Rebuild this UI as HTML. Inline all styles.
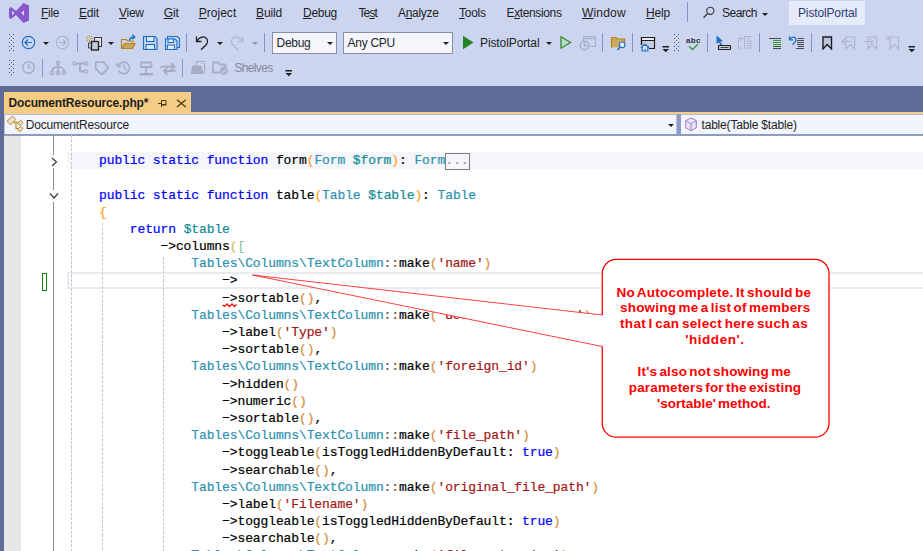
<!DOCTYPE html>
<html><head><meta charset='utf-8'><title>PistolPortal</title><style>
html,body{margin:0;padding:0}
body{width:923px;height:551px;overflow:hidden;position:relative;background:#ccd5f0;font-family:"Liberation Sans", sans-serif;}
.t{position:absolute;white-space:pre;line-height:16px;font-size:12px;font-family:"Liberation Sans", sans-serif;}
.a{position:absolute}
u{text-decoration:underline;text-decoration-thickness:1px;text-underline-offset:1px}
.ln{position:absolute;left:99px;white-space:pre;font-family:"Liberation Mono", monospace;font-size:13px;letter-spacing:-0.11px;line-height:17px;height:17px;color:#000;-webkit-text-stroke:0.2px currentColor}
.k{color:#0000ff}.ty{color:#2b91af}.v{color:#0f8a96}.s{color:#a31515}
.p1{color:#ffa31a}.p2{color:#d4bc6a}.p3{color:#8cc896}.p4{color:#d4903c}.g{color:#5a5a5a}
.cal{position:absolute;white-space:pre;font-family:"Liberation Sans", sans-serif;font-weight:bold;font-size:13.5px;color:#ff0000;line-height:16px}
</style></head>
<body>
<div class='t' style='left:41px;top:5px;letter-spacing:-0.286px;color:#1e1e1e'><u>F</u>ile</div>
<div class='t' style='left:79px;top:5px;letter-spacing:-0.172px;color:#1e1e1e'><u>E</u>dit</div>
<div class='t' style='left:119px;top:5px;letter-spacing:-0.262px;color:#1e1e1e'><u>V</u>iew</div>
<div class='t' style='left:163.75px;top:5px;letter-spacing:-0.115px;color:#1e1e1e'><u>G</u>it</div>
<div class='t' style='left:198.75px;top:5px;letter-spacing:0.020px;color:#1e1e1e'><u>P</u>roject</div>
<div class='t' style='left:256px;top:5px;letter-spacing:-0.138px;color:#1e1e1e'><u>B</u>uild</div>
<div class='t' style='left:303px;top:5px;letter-spacing:-0.275px;color:#1e1e1e'><u>D</u>ebug</div>
<div class='t' style='left:358.5px;top:5px;letter-spacing:-0.879px;color:#1e1e1e'>Te<u>s</u>t</div>
<div class='t' style='left:398px;top:5px;letter-spacing:-0.315px;color:#1e1e1e'>A<u>n</u>alyze</div>
<div class='t' style='left:459px;top:5px;letter-spacing:-0.253px;color:#1e1e1e'><u>T</u>ools</div>
<div class='t' style='left:506.5px;top:5px;letter-spacing:-0.370px;color:#1e1e1e'>E<u>x</u>tensions</div>
<div class='t' style='left:582px;top:5px;letter-spacing:0.177px;color:#1e1e1e'><u>W</u>indow</div>
<div class='t' style='left:646px;top:5px;letter-spacing:-0.172px;color:#1e1e1e'><u>H</u>elp</div>
<svg class='a' style='left:8px;top:2px' width='22' height='22' viewBox='0 0 22 22'>
<path d='M1 6.500 L3 5 L8 9 L15.500 1 L21 3.500 L21 18.500 L15.500 21 L8 13 L3 17 L1 15.500 Z M4 8.500 L6.500 11 L4 13.500 Z M16 8.200 L13.200 11 L16 13.800 Z' fill='#8a56cc' fill-rule='evenodd'/></svg>
<div class='a' style='left:687px;top:2px;width:1px;height:20px;background:#8093c6'></div>
<svg class='a' style='left:702px;top:6px' width='14' height='14' viewBox='0 0 14 14'><circle cx='8.300' cy='4.800' r='3.600' fill='none' stroke='#3a3a3a' stroke-width='1.100'/><path d='M5.700 7.500 L1.500 11.800' stroke='#3a3a3a' stroke-width='1.300' fill='none'/></svg>
<div class='t ' style='left:722px;top:5px;font-size:12px;font-weight:normal;color:#1e1e1e;letter-spacing:-0.505px;'>Search</div>
<div class='a' style='left:762px;top:13px;width:0;height:0;border-left:3px solid transparent;border-right:3px solid transparent;border-top:3px solid #1e1e1e'></div>
<div class='a' style='left:789px;top:1px;width:76px;height:23.500px;background:#e6ebfa'></div>
<div class='t ' style='left:798px;top:5px;font-size:12px;font-weight:normal;color:#2b3a75;letter-spacing:-0.142px;'>PistolPortal</div>
<svg class='a' style='left:9px;top:34px' width='5' height='21' fill='#4a5680' shape-rendering='crispEdges'><rect x='0' y='0' width='1' height='1'/><rect x='4' y='0' width='1' height='1'/><rect x='2' y='2' width='1' height='1'/><rect x='0' y='4' width='1' height='1'/><rect x='4' y='4' width='1' height='1'/><rect x='2' y='6' width='1' height='1'/><rect x='0' y='8' width='1' height='1'/><rect x='4' y='8' width='1' height='1'/><rect x='2' y='10' width='1' height='1'/><rect x='0' y='12' width='1' height='1'/><rect x='4' y='12' width='1' height='1'/><rect x='2' y='14' width='1' height='1'/><rect x='0' y='16' width='1' height='1'/><rect x='4' y='16' width='1' height='1'/></svg>
<svg class='a' style='left:21px;top:35px' width='15' height='15' viewBox='0 0 15 15'><circle cx='7.5' cy='7.5' r='6.2' fill='none' stroke='#1b6fc2' stroke-width='1.2'/><path d='M11 7.5 H4.2 M7 4.5 L4 7.5 L7 10.5' fill='none' stroke='#1b6fc2' stroke-width='1.2'/></svg>
<div class='a' style='left:43px;top:42px;width:0;height:0;border-left:3px solid transparent;border-right:3px solid transparent;border-top:3px solid #1e1e1e'></div>
<svg class='a' style='left:55px;top:35px' width='15' height='15' viewBox='0 0 15 15'><circle cx='7.5' cy='7.5' r='6.2' fill='none' stroke='#a9b0c8' stroke-width='1.1'/><path d='M4 7.5 H10.8 M8 4.5 L11 7.5 L8 10.5' fill='none' stroke='#a9b0c8' stroke-width='1.1'/></svg>
<div class='a' style='left:77px;top:33px;width:1px;height:19px;background:#8093c6'></div>
<svg class='a' style='left:85px;top:34px' width='18' height='17' viewBox='0 0 18 17'>
<g stroke='#c8922a' stroke-width='0.900' fill='none'><path d='M4.500 1 V3.200 M4.500 5.800 V8 M1 4.500 H3.200 M5.800 4.500 H8 M2 2 L3.600 3.600 M5.400 5.400 L7 7 M7 2 L5.400 3.600 M3.600 5.400 L2 7'/></g>
<rect x='9.500' y='3.500' width='7' height='9' fill='#dfe3f0' stroke='#3a3a3a' stroke-width='1'/>
<path d='M6.500 9 H3.500 V14 H6.500' fill='none' stroke='#3a3a3a' stroke-width='1'/>
<rect x='6.500' y='7.500' width='7' height='8.500' fill='#c4c9dc' stroke='#1e1e1e' stroke-width='1.300'/></svg>
<div class='a' style='left:108px;top:42px;width:0;height:0;border-left:3px solid transparent;border-right:3px solid transparent;border-top:3px solid #1e1e1e'></div>
<svg class='a' style='left:120px;top:34px' width='17' height='16' viewBox='0 0 17 16'>
<path d='M1.500 14.500 V5.500 H6 L7.500 7 H13 V9' fill='none' stroke='#b58516' stroke-width='1.200'/><path d='M1.500 14.500 L4.500 9.500 H15 L12.500 14.500 Z' fill='#c9a55a' stroke='#b58516' stroke-width='1.200' stroke-linejoin='round'/>
<path d='M9.500 7 C9.500 4 11.500 3 14.200 3 M12.300 0.800 L14.800 3 L12.300 5.200' fill='none' stroke='#1b6fc2' stroke-width='1.300'/></svg>
<svg class='a' style='left:142px;top:35px' width='16' height='15' viewBox='0 0 16 15'><path d='M1.500 1.500 H13 L15 3.500 V14.500 H1.500 Z' fill='#c5d5ee' stroke='#1b6fc2' stroke-width='1.100'/><rect x='4.500' y='1.500' width='7.500' height='5' fill='#dfe9f8' stroke='#1b6fc2' stroke-width='1.100'/><rect x='4' y='9.500' width='8.500' height='5' fill='#dfe9f8' stroke='#1b6fc2' stroke-width='1.100'/></svg>
<svg class='a' style='left:164px;top:35px' width='17' height='15' viewBox='0 0 17 15'><path d='M3.500 3.500 V1.500 H13.500 L15.500 3.500 V12.500 H13' fill='#c5d5ee' stroke='#1b6fc2' stroke-width='1.100'/><path d='M1.500 4 H11 L13 6 V14.500 H1.500 Z' fill='#c5d5ee' stroke='#1b6fc2' stroke-width='1.100'/><rect x='4' y='4' width='5.500' height='3.500' fill='#dfe9f8' stroke='#1b6fc2' stroke-width='1'/><rect x='3.500' y='10' width='7' height='4.500' fill='#dfe9f8' stroke='#1b6fc2' stroke-width='1'/></svg>
<div class='a' style='left:186px;top:33px;width:1px;height:19px;background:#8093c6'></div>
<svg class='a' style='left:194px;top:35px' width='16' height='16' viewBox='0 0 16 16'><path d='M2.500 1.500 V6.500 H7.500 M3 6 C5 2.500 9 1 11.500 2.500 C14.500 4.500 14 8 11.500 10.500 L7 14.800' fill='none' stroke='#1e1e1e' stroke-width='1.300'/></svg>
<div class='a' style='left:217px;top:42px;width:0;height:0;border-left:3px solid transparent;border-right:3px solid transparent;border-top:3px solid #1e1e1e'></div>
<svg class='a' style='left:230px;top:35px' width='16' height='16' viewBox='0 0 16 16'><path d='M12.500 1.500 V6.500 H7.500 M12 6 C10 2.500 6 1 3.500 2.500 C0.500 4.500 1 8 3.500 10.500 L8 14.800' fill='none' stroke='#aeb4ca' stroke-width='1.200'/></svg>
<div class='a' style='left:252px;top:42px;width:0;height:0;border-left:3px solid transparent;border-right:3px solid transparent;border-top:3px solid #8e96b4'></div>
<div class='a' style='left:264px;top:33px;width:1px;height:19px;background:#8093c6'></div>
<div class='a' style='left:272px;top:32px;width:63px;height:20px;background:#f4f6fc;border:1px solid #8790a8'></div><div class='t ' style='left:276.5px;top:35px;font-size:12px;font-weight:normal;color:#1e1e1e;letter-spacing:-0.275px;'>Debug</div><div class='a' style='left:327px;top:42px;width:0;height:0;border-left:3px solid transparent;border-right:3px solid transparent;border-top:3px solid #1e1e1e'></div>
<div class='a' style='left:343px;top:32px;width:108px;height:20px;background:#f4f6fc;border:1px solid #8790a8'></div><div class='t ' style='left:347.5px;top:35px;font-size:12px;font-weight:normal;color:#1e1e1e;letter-spacing:-0.266px;'>Any CPU</div><div class='a' style='left:443px;top:42px;width:0;height:0;border-left:3px solid transparent;border-right:3px solid transparent;border-top:3px solid #1e1e1e'></div>
<svg class='a' style='left:462px;top:35px' width='13' height='15' viewBox='0 0 13 15'><path d='M1 0.800 L11.500 7.500 L1 14.200 Z' fill='#238423'/></svg>
<div class='t ' style='left:480px;top:35px;font-size:12px;font-weight:normal;color:#1e1e1e;letter-spacing:-0.100px;'>PistolPortal</div>
<div class='a' style='left:546px;top:42px;width:0;height:0;border-left:3px solid transparent;border-right:3px solid transparent;border-top:3px solid #1e1e1e'></div>
<svg class='a' style='left:559px;top:35px' width='13' height='15' viewBox='0 0 13 15'><path d='M2 1.800 L11.500 7.500 L2 13.200 Z' fill='#c2d6d4' stroke='#2e8b2e' stroke-width='1.3'/></svg>
<svg class='a' style='left:579px;top:35px' width='18' height='16' viewBox='0 0 18 16'><path d='M4.500 6 V1.500 H16.500 V11.500 H11' fill='none' stroke='#a9b0c8' stroke-width='1.2'/><path d='M4.500 3.500 H16.500' stroke='#a9b0c8' stroke-width='1.5'/><circle cx='5.500' cy='10.500' r='4.300' fill='none' stroke='#a9b0c8' stroke-width='1.5'/><path d='M5.500 7.500 V10.800 H8.500' fill='none' stroke='#a9b0c8' stroke-width='1.5'/></svg>
<div class='a' style='left:602px;top:33px;width:1px;height:19px;background:#8093c6'></div>
<svg class='a' style='left:610px;top:35px' width='17' height='16' viewBox='0 0 17 16'><path d='M1.500 12.500 V2.500 H6 L7.500 4 H14.500 V8' fill='#c9a961' stroke='#b58516' stroke-width='1.200'/><path d='M1.500 12.500 H9 V5.500 H14.500' fill='#c9a961' stroke='none'/><circle cx='12.200' cy='9.800' r='2.800' fill='#f2f6fd' stroke='#1b6fc2' stroke-width='1.2'/><path d='M10.200 12 L7.500 15' stroke='#1b6fc2' stroke-width='1.5'/></svg>
<div class='a' style='left:632px;top:33px;width:1px;height:19px;background:#8093c6'></div>
<svg class='a' style='left:640px;top:36px' width='17' height='16' viewBox='0 0 17 16'><rect x='1.500' y='1.500' width='13' height='11' fill='#c8cde0' stroke='none'/><path d='M1.500 9 V1.500 H14.500 V12.500 H9' fill='none' stroke='#1e1e1e' stroke-width='1.200'/><path d='M1.500 4.500 H14.500' stroke='#1e1e1e' stroke-width='1'/><path d='M1.500 1.500 H14.500 V4.500 H1.500 Z' fill='#e8ebf6'/><path d='M1.500 9 V1.500 H14.500 V5' fill='none' stroke='#1e1e1e' stroke-width='1.200'/><path d='M1.500 4.500 H14.500' stroke='#1e1e1e' stroke-width='1'/><path d='M0.800 11.800 L5 8.300 L9.200 11.800 M2.200 11 V15 H7.800 V11' fill='#eef2fb' stroke='#1b6fc2' stroke-width='1.200'/><path d='M5 15 V12.800' stroke='#1b6fc2' stroke-width='1.200'/></svg>
<svg class='a' style='left:662px;top:45.5px' width='8' height='7' viewBox='0 0 8 7'><path d='M0.500 0 H7 V1.500 H0.500 Z M0.500 3 H7 L3.750 6.300 Z' fill='#1e1e1e'/></svg>
<svg class='a' style='left:674px;top:34px' width='5' height='21' fill='#4a5680' shape-rendering='crispEdges'><rect x='0' y='0' width='1' height='1'/><rect x='4' y='0' width='1' height='1'/><rect x='2' y='2' width='1' height='1'/><rect x='0' y='4' width='1' height='1'/><rect x='4' y='4' width='1' height='1'/><rect x='2' y='6' width='1' height='1'/><rect x='0' y='8' width='1' height='1'/><rect x='4' y='8' width='1' height='1'/><rect x='2' y='10' width='1' height='1'/><rect x='0' y='12' width='1' height='1'/><rect x='4' y='12' width='1' height='1'/><rect x='2' y='14' width='1' height='1'/><rect x='0' y='16' width='1' height='1'/><rect x='4' y='16' width='1' height='1'/></svg>
<div class='t' style='left:686px;top:35.100px;font-size:8px;font-weight:bold;letter-spacing:0.300px;color:#2c2c2c;line-height:11px'>abc</div>
<svg class='a' style='left:688px;top:43px' width='12' height='8' viewBox='0 0 12 8'><path d='M1 3.300 L4.500 6.500 L10 1' fill='none' stroke='#2e9b2e' stroke-width='1.300'/></svg>
<div class='a' style='left:707px;top:33px;width:1px;height:19px;background:#8093c6'></div>
<svg class='a' style='left:714px;top:34px' width='18' height='17' viewBox='0 0 18 17'><path d='M2.500 1.500 L2.500 10 L4.800 8.300 L6.800 11.500 L8.200 10.700 L6.300 7.500 L9 7.200 Z' fill='#1b6fc2'/><rect x='4.500' y='11.500' width='12' height='4' rx='0.800' fill='#c8cde0' stroke='#1e1e1e' stroke-width='1.200'/><path d='M6.500 13.500 H14.500' stroke='#1e1e1e' stroke-width='0.800'/></svg>
<svg class='a' style='left:737px;top:35px' width='16' height='15' viewBox='0 0 16 15'><g fill='none' stroke='#aeb4ca'><path d='M5 13 H1.500 V3.500 H5 M3.300 1.500 L5.300 3.500 L3.300 5.500' stroke-width='1'/><path d='M7.500 14.500 V1.500 H15' stroke-width='1.100'/><path d='M9.500 3.800 H13 M9.500 6.100 H15 M9.500 8.400 H15 M9.500 10.700 H15 M9.500 13 H15' stroke-width='1'/></g></svg>
<div class='a' style='left:759px;top:33px;width:1px;height:19px;background:#8093c6'></div>
<svg class='a' style='left:768px;top:36px' width='14' height='14' viewBox='0 0 14 14'><g shape-rendering='crispEdges'><path d='M1 2.500 H13 M5 10.500 H13 M5 12.500 H13' stroke='#484848' stroke-width='1'/><path d='M5 4.500 H13 M5 6.500 H13 M5 8.500 H13' stroke='#2e9b2e' stroke-width='1'/></g></svg>
<svg class='a' style='left:788px;top:35px' width='18' height='15' viewBox='0 0 18 15'><path d='M1.500 1.200 V4.800 H5.200 M2 4.500 C3.500 1.200 8 1.500 8 4.800 C8 7 6 7.500 4.500 9.800' fill='none' stroke='#1b6fc2' stroke-width='1.300'/><path shape-rendering='crispEdges' d='M10 3.500 H16 M9 5.500 H16 M9 7.500 H16 M9 9.500 H16 M10 11.500 H16 M8 13.500 H16' stroke='#484848' stroke-width='1'/></svg>
<div class='a' style='left:811px;top:33px;width:1px;height:19px;background:#8093c6'></div>
<svg class='a' style='left:817px;top:35px' width='18' height='15' viewBox='0 0 18 15'><path d='M6 2 H14.5 V14 L10.25 9.500 L6 14 Z' fill='#bcc4e0' stroke='#1e1e1e' stroke-width='1.4'/></svg>
<svg class='a' style='left:840px;top:35px' width='18' height='15' viewBox='0 0 18 15'><path d='M6 2 H14.5 V14 L10.25 9.500 L6 14 Z' fill='none' stroke='#b0b6cc' stroke-width='1.2'/><path d='M2 6.500 H11 M4.800 4 L2 6.500 L4.800 9' fill='none' stroke='#b0b6cc' stroke-width='1.100'/></svg>
<svg class='a' style='left:862px;top:35px' width='18' height='15' viewBox='0 0 18 15'><path d='M6 2 H14.5 V14 L10.25 9.500 L6 14 Z' fill='none' stroke='#b0b6cc' stroke-width='1.2'/><path d='M1 6.500 H11 M8.300 4 L11 6.500 L8.300 9' fill='none' stroke='#b0b6cc' stroke-width='1.100'/></svg>
<svg class='a' style='left:884px;top:35px' width='18' height='15' viewBox='0 0 18 15'><path d='M6 2 H14.5 V14 L10.25 9.500 L6 14 Z' fill='none' stroke='#b0b6cc' stroke-width='1.2'/><path d='M1.500 0.500 L6.500 5.500 M6.500 0.500 L1.500 5.500' fill='none' stroke='#b0b6cc' stroke-width='1'/></svg>
<svg class='a' style='left:908px;top:46px' width='8' height='7' viewBox='0 0 8 7'><path d='M0.500 0 H7 V1.500 H0.500 Z M0.500 3 H7 L3.750 6.300 Z' fill='#1e1e1e'/></svg>
<svg class='a' style='left:9px;top:60px' width='5' height='18' fill='#4a5680' shape-rendering='crispEdges'><rect x='0' y='0' width='1' height='1'/><rect x='4' y='0' width='1' height='1'/><rect x='2' y='2' width='1' height='1'/><rect x='0' y='4' width='1' height='1'/><rect x='4' y='4' width='1' height='1'/><rect x='2' y='6' width='1' height='1'/><rect x='0' y='8' width='1' height='1'/><rect x='4' y='8' width='1' height='1'/><rect x='2' y='10' width='1' height='1'/><rect x='0' y='12' width='1' height='1'/><rect x='4' y='12' width='1' height='1'/><rect x='2' y='14' width='1' height='1'/></svg>
<svg class='a' style='left:21px;top:60px' width='15' height='15' viewBox='0 0 15 15'><circle cx='7.500' cy='7.500' r='5.800' fill='none' stroke='#a7adc3' stroke-width='1.500'/><path d='M7.500 3.800 V7.800 H10.500' fill='none' stroke='#a7adc3' stroke-width='1.300'/></svg>
<div class='a' style='left:42px;top:59px;width:1px;height:18px;background:#8797c8'></div>
<svg class='a' style='left:49px;top:60px' width='18' height='16' viewBox='0 0 18 16'><g fill='none' stroke='#a7adc3' stroke-width='1.500'><circle cx='9' cy='2.800' r='1.600'/><circle cx='3' cy='13' r='1.600'/><circle cx='9' cy='13' r='1.600'/><circle cx='15' cy='13' r='1.600'/><path d='M9 4.500 V11.300 M3 11.300 C3 5.500 15 5.500 15 11.300' stroke-width='1.800'/></g></svg>
<svg class='a' style='left:72px;top:60px' width='17' height='15' viewBox='0 0 17 15'><g fill='none' stroke='#a7adc3'><path d='M4.500 3.500 H12 M8 3.500 V10 Q8 11.500 9.500 11.500 H12' stroke-width='2.200'/><circle cx='2.700' cy='3.500' r='1.700' stroke-width='1.300'/><circle cx='14' cy='3.500' r='1.700' stroke-width='1.300'/><circle cx='14' cy='11.500' r='1.700' stroke-width='1.300'/></g></svg>
<svg class='a' style='left:94px;top:60px' width='16' height='16' viewBox='0 0 16 16'><path d='M1.800 2.200 H9.800 L14.300 8 L8 14.500 L1.800 9 Z' fill='none' stroke='#a7adc3' stroke-width='1.800' stroke-linejoin='round'/></svg>
<svg class='a' style='left:115px;top:60px' width='16' height='16' viewBox='0 0 16 16'><path d='M3.200 6 A5.800 5.800 0 1 1 3.500 10.500' fill='none' stroke='#a7adc3' stroke-width='1.700'/><path d='M1 3.500 L3 6.800 L6.300 5.500' fill='none' stroke='#a7adc3' stroke-width='1.500'/><path d='M9 4.500 V8 L11.300 10.500' fill='none' stroke='#a7adc3' stroke-width='1.400'/></svg>
<svg class='a' style='left:138px;top:60px' width='16' height='16' viewBox='0 0 16 16'><g fill='none' stroke='#a7adc3'><rect x='3' y='2.500' width='10.500' height='4.500' stroke-width='1.800' rx='0.500'/><path d='M8.200 7 V13' stroke-width='1.800'/><path d='M1.500 14.200 H15' stroke-width='2.400'/></g></svg>
<svg class='a' style='left:159px;top:60px' width='18' height='16' viewBox='0 0 18 16'><g fill='none' stroke='#a7adc3' stroke-width='1.800'><path d='M2 8 Q2 6.500 4 6.500 H15 M12 3 L15.500 6.500 L12 10'/><path d='M16.500 9.500 Q16.500 11 14.500 11 H5.500 M8.500 7.500 L5 11 L8.500 14.500' /></g></svg>
<div class='a' style='left:182px;top:59px;width:1px;height:18px;background:#8797c8'></div>
<svg class='a' style='left:190px;top:60px' width='16' height='15' viewBox='0 0 16 15'><path d='M6.500 5 V1.500 H14.500 V13' fill='#d5dbee' stroke='#a7adc3' stroke-width='1.200'/><path d='M1.500 13.500 L2.500 6 H11 L13.500 13.500 Z' fill='#a7adc3' stroke='#a7adc3' stroke-width='1'/><path d='M10.500 3.500 H12.500' stroke='#a7adc3'/></svg>
<svg class='a' style='left:211px;top:60px' width='18' height='16' viewBox='0 0 18 16'><path d='M9 12.500 H2 V2.500 H7 L9 4.500 H14.500 V7' fill='none' stroke='#a7adc3' stroke-width='1.800' stroke-linejoin='round'/><circle cx='13' cy='10.700' r='4' fill='#a7adc3'/><path d='M11 10.700 L12.600 12.300 L15.200 9.300' fill='none' stroke='#ccd5f0' stroke-width='1.200'/></svg>
<div class='t ' style='left:234.5px;top:60px;font-size:12px;font-weight:normal;color:#85889a;letter-spacing:-0.672px;'>Shelves</div>
<svg class='a' style='left:285px;top:69.5px' width='8' height='7' viewBox='0 0 8 7'><path d='M0.500 0 H7 V1.500 H0.500 Z M0.500 3 H7 L3.750 6.300 Z' fill='#1e1e1e'/></svg>
<div class='a' style='left:0;top:86px;width:923px;height:465px;background:#5d6b99'></div>
<div class='a' style='left:4px;top:112px;width:919px;height:2px;background:#f5cc84'></div>
<div class='a' style='left:4px;top:92px;width:187px;height:22px;background:#f5cc84'></div>
<div class='t ' style='left:8.5px;top:95px;font-size:12px;font-weight:bold;color:#1e1e1e;letter-spacing:-0.174px;'>DocumentResource.php*</div>
<svg class='a' style='left:157px;top:98px' width='11' height='11' viewBox='0 0 11 11'><path d='M1 5.500 H4.500 M4.500 2 V9 M4.500 2.500 H9 V7 H4.500 M9 6.500 H5' fill='none' stroke='#4f3a10' stroke-width='1'/></svg>
<svg class='a' style='left:176px;top:99px' width='11' height='9' viewBox='0 0 11 9'><path d='M1 0.800 L9.800 8 M9.800 0.800 L1 8' stroke='#4f3a10' stroke-width='1.300'/></svg>
<div class='a' style='left:4px;top:114px;width:919px;height:21px;background:#b4bedb'></div>
<div class='a' style='left:5px;top:115px;width:671px;height:19px;background:#f2f5fd'></div>
<div class='a' style='left:677px;top:114px;width:3.500px;height:21px;background:#8c9bc8'></div>
<div class='a' style='left:681px;top:115px;width:242px;height:19px;background:#f2f5fd'></div>
<div class='a' style='left:4px;top:134px;width:919px;height:1.500px;background:#8e9bbc'></div>
<svg class='a' style='left:6px;top:115px' width='18' height='18' viewBox='0 0 18 18'><g fill='#e9e5da' stroke='#b8860b' stroke-width='1' stroke-linejoin='miter'><path d='M1 6.250 L6.500 1.250 L9.750 4.500 L4.500 9.750 Z'/><path d='M11.750 8.500 L14.750 5.250 L17 7.500 L13.750 10.500 Z'/><path d='M11.500 14.250 L14.750 11.500 L17 13.250 L13.750 16.750 Z'/></g><path d='M7 6.500 L8 7.250 H12.500 M10 7.250 V13.500 H12.500' fill='none' stroke='#b8860b' stroke-width='1.100'/></svg>
<div class='t ' style='left:25.7px;top:117px;font-size:12px;font-weight:normal;color:#1e1e1e;letter-spacing:-0.173px;'>DocumentResource</div>
<div class='a' style='left:668px;top:124px;width:0;height:0;border-left:3px solid transparent;border-right:3px solid transparent;border-top:3px solid #1e1e1e'></div>
<svg class='a' style='left:685px;top:117px' width='13' height='15' viewBox='0 0 13 15'><path d='M6 1 L11.300 3.600 V10.800 L6 13.800 L0.700 10.800 V3.600 Z M0.700 3.600 L6 6.500 L11.300 3.600 M6 6.500 V13.800' fill='#e9e2f6' stroke='#9c82c9' stroke-width='1' stroke-linejoin='round'/></svg>
<div class='t ' style='left:701.5px;top:117px;font-size:12px;font-weight:normal;color:#1e1e1e;letter-spacing:-0.186px;'>table(Table $table)</div>
<div class='a' style='left:4px;top:135.500px;width:919px;height:416px;background:#ffffff'></div>
<div class='a' style='left:4px;top:135.500px;width:17px;height:416px;background:#e6e7e8'></div>
<div class='a' style='left:53px;top:135px;width:1px;height:416px;background:#8c8c8c'></div>
<div class='a' style='left:67px;top:152px;width:856px;height:17.400px;background:#f5f6fa'></div>
<div class='a' style='left:67px;top:272px;width:860px;height:13px;border:2px solid #eaeaf2;background:#fff'></div>
<div class='a' style='left:71px;top:135px;width:1px;height:416px;background:repeating-linear-gradient(to bottom,#c8c8c8 0,#c8c8c8 3px,transparent 3px,transparent 4.5px)'></div>
<div class='a' style='left:102px;top:223px;width:1px;height:328px;background:repeating-linear-gradient(to bottom,#c8c8c8 0,#c8c8c8 3px,transparent 3px,transparent 4.5px)'></div>
<div class='a' style='left:163px;top:257px;width:1px;height:294px;background:repeating-linear-gradient(to bottom,#c8c8c8 0,#c8c8c8 3px,transparent 3px,transparent 4.5px)'></div>
<div class='a' style='left:48px;top:155px;width:11px;height:13px;background:#fff'></div>
<svg class='a' style='left:50px;top:156px' width='8' height='12' viewBox='0 0 8 12'><path d='M2 2 L6.500 6 L2 10' fill='none' stroke='#3c3c3c' stroke-width='1.200'/></svg>
<div class='a' style='left:48px;top:190px;width:11px;height:12px;background:#fff'></div>
<svg class='a' style='left:48px;top:191px' width='12' height='9' viewBox='0 0 12 9'><path d='M2 2.500 L6 7 L10 2.500' fill='none' stroke='#3c3c3c' stroke-width='1.200'/></svg>
<div class='a' style='left:42px;top:273px;width:3px;height:16px;border:1px solid #118011'></div>
<div class='ln' style='top:152px'><span class='k'>public static function</span> form<span class='p1'>(</span><span class='ty'>Form</span> <span class='v'>$form</span><span class='p1'>)</span>: <span class='ty'>Form</span></div>
<div class='ln' style='top:169px'></div>
<div class='ln' style='top:187px'><span class='k'>public static function</span> table<span class='p1'>(</span><span class='ty'>Table</span> <span class='v'>$table</span><span class='p1'>)</span>: <span class='ty'>Table</span></div>
<div class='ln' style='top:204px'><span class='p1'>{</span></div>
<div class='ln' style='top:221px'>    <span class='k'>return</span> <span class='v'>$table</span></div>
<div class='ln' style='top:238px'>        −>columns<span class='p2'>(</span><span class='p3'>[</span></div>
<div class='ln' style='top:255px'>            <span class='ty'>Tables\Columns\TextColumn</span><span class='g'>::</span>make<span class='p4'>(</span><span class='s'>&#x27;name&#x27;</span><span class='p4'>)</span></div>
<div class='ln' style='top:272px'>                −></div>
<div class='ln' style='top:290px'>                −>sortable<span class='p4'>(</span><span class='p4'>)</span>,</div>
<div class='ln' style='top:307px'>            <span class='ty'>Tables\Columns\TextColumn</span><span class='g'>::</span>make<span class='p4'>(</span><span class='s'>&#x27;documentable_type&#x27;</span><span class='p4'>)</span></div>
<div class='ln' style='top:324px'>                −>label<span class='p4'>(</span><span class='s'>&#x27;Type&#x27;</span><span class='p4'>)</span></div>
<div class='ln' style='top:341px'>                −>sortable<span class='p4'>(</span><span class='p4'>)</span>,</div>
<div class='ln' style='top:358px'>            <span class='ty'>Tables\Columns\TextColumn</span><span class='g'>::</span>make<span class='p4'>(</span><span class='s'>&#x27;foreign_id&#x27;</span><span class='p4'>)</span></div>
<div class='ln' style='top:376px'>                −>hidden<span class='p4'>(</span><span class='p4'>)</span></div>
<div class='ln' style='top:393px'>                −>numeric<span class='p4'>(</span><span class='p4'>)</span></div>
<div class='ln' style='top:410px'>                −>sortable<span class='p4'>(</span><span class='p4'>)</span>,</div>
<div class='ln' style='top:427px'>            <span class='ty'>Tables\Columns\TextColumn</span><span class='g'>::</span>make<span class='p4'>(</span><span class='s'>&#x27;file_path&#x27;</span><span class='p4'>)</span></div>
<div class='ln' style='top:444px'>                −>toggleable<span class='p4'>(</span>isToggledHiddenByDefault: <span class='k'>true</span><span class='p4'>)</span></div>
<div class='ln' style='top:462px'>                −>searchable<span class='p4'>(</span><span class='p4'>)</span>,</div>
<div class='ln' style='top:479px'>            <span class='ty'>Tables\Columns\TextColumn</span><span class='g'>::</span>make<span class='p4'>(</span><span class='s'>&#x27;original_file_path&#x27;</span><span class='p4'>)</span></div>
<div class='ln' style='top:496px'>                −>label<span class='p4'>(</span><span class='s'>&#x27;Filename&#x27;</span><span class='p4'>)</span></div>
<div class='ln' style='top:513px'>                −>toggleable<span class='p4'>(</span>isToggledHiddenByDefault: <span class='k'>true</span><span class='p4'>)</span></div>
<div class='ln' style='top:530px'>                −>searchable<span class='p4'>(</span><span class='p4'>)</span>,</div>
<div class='ln' style='top:547px'>            <span class='ty'>Tables\Columns\TextColumn</span><span class='g'>::</span>make<span class='p4'>(</span><span class='s'>&#x27;file_extension&#x27;</span><span class='p4'>)</span></div>
<div class='a' style='left:445px;top:153px;width:23px;height:15px;border:1px solid #7e7e7e;background:#f5f6fa'></div>
<div class='ln' style='left:445.5px;top:152px;color:#9a9a9a'>...</div>
<svg class='a' style='left:222px;top:303px' width='16' height='5' viewBox='0 0 16 5'><path d='M0.500 2 L2.500 3.500 L5 1 L7.500 3.500 L10 1 L12.500 3.500 L14.500 1.500' fill='none' stroke='#e51400' stroke-width='1.300'/></svg>
<svg class='a' style='left:0;top:0' width='923' height='551' viewBox='0 0 923 551'>
<path d='M602.3 315.0 V273.4 A14 14 0 0 1 616.3 259.4 H815.0 A14 14 0 0 1 829.0 273.4 V423.2 A14 14 0 0 1 815.0 437.2 H616.3 A14 14 0 0 1 602.3 423.2 V346.5 L252.500 275 Z' fill='#ffffff' stroke='none'/>
<path d='M602.3 315.0 V273.4 A14 14 0 0 1 616.3 259.4 H815.0 A14 14 0 0 1 829.0 273.4 V423.2 A14 14 0 0 1 815.0 437.2 H616.3 A14 14 0 0 1 602.3 423.2 V346.5' fill='none' stroke='#ff0000' stroke-width='1.300'/>
<path d='M602.3 346.5 L252.500 275 L602.3 315.0' fill='none' stroke='#ff1010' stroke-width='0.800' stroke-linejoin='round'/></svg>
<div class='cal' style='left:616.5px;top:285.00px;letter-spacing:0.228px;word-spacing:-1.6px'>No Autocomplete. It should be</div>
<div class='cal' style='left:620px;top:300.10px;letter-spacing:0.204px;word-spacing:-1.6px'>showing me a list of members</div>
<div class='cal' style='left:620px;top:316.00px;letter-spacing:0.334px;word-spacing:-1.6px'>that I can select here such as</div>
<div class='cal' style='left:685.2px;top:332.00px;letter-spacing:0.553px;word-spacing:-1.6px'>&#x27;hidden&#x27;.</div>
<div class='cal' style='left:637.6px;top:364.10px;letter-spacing:0.149px;word-spacing:-1.6px'>It&#x27;s also not showing me</div>
<div class='cal' style='left:628.8px;top:379.90px;letter-spacing:0.144px;word-spacing:-1.6px'>parameters for the existing</div>
<div class='cal' style='left:657px;top:395.70px;letter-spacing:-0.010px;word-spacing:-1.6px'>&#x27;sortable&#x27; method.</div>
</body></html>
